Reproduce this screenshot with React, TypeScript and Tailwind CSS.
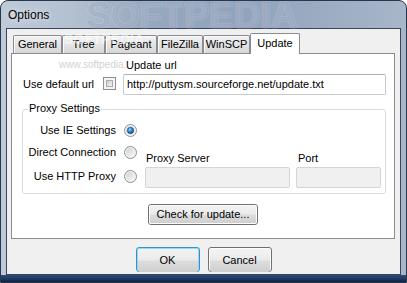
import React from "react";

const Radio = ({ checked }: { checked?: boolean }) => (
  <svg width="13" height="13" viewBox="0 0 13 13" className="block shrink-0">
    <defs>
      <linearGradient id="rgFill" x1="0" y1="0" x2="1" y2="1">
        <stop offset="0" stopColor="#cfd1d4" />
        <stop offset="1" stopColor="#fafafa" />
      </linearGradient>
      <radialGradient id="rgDot" cx="0.4" cy="0.35" r="0.75">
        <stop offset="0" stopColor="#a8dcfb" />
        <stop offset="0.45" stopColor="#2d86d2" />
        <stop offset="1" stopColor="#0c3a73" />
      </radialGradient>
    </defs>
    <circle cx="6.5" cy="6.5" r="6" fill="#f4f4f4" stroke="#8e8f8f" strokeWidth="1" />
    <circle cx="6.5" cy="6.5" r="4.5" fill="url(#rgFill)" />
    {checked && <circle cx="6.5" cy="6.5" r="3.2" fill="url(#rgDot)" stroke="#1a4c86" strokeWidth="0.6" />}
  </svg>
);

const Checkbox = () => (
  <div className="w-[13px] h-[13px] shrink-0 self-start mt-[3px] border border-[#8e8f8f] bg-[#f4f4f4] p-[2px]">
    <div className="w-full h-full border border-[#a9adb3] bg-[linear-gradient(135deg,#cbced2,#f3f4f5)]" />
  </div>
);

const Btn = ({ children, def, w }: { children: React.ReactNode; def?: boolean; w: string }) => (
  <div
    className={
      def
        ? "h-[25px] rounded-[3px] border border-[#3c8fc6] shadow-[inset_0_0_0_1px_#8fdcf8] " + w
        : "h-[25px] rounded-[3px] border border-[#707070] shadow-[inset_0_0_0_1px_#fcfcfc] " + w
    }
  >
    <div className="h-full m-[1px] rounded-[2px] bg-[linear-gradient(180deg,#f2f2f2_0%,#ebebeb_48%,#dddddd_52%,#cfcfcf_100%)] flex items-center justify-center text-black leading-[13px]">
      {children}
    </div>
  </div>
);

const SmallBtn = ({ children }: { children: React.ReactNode }) => (
  <div className="h-[21px] w-[110px] self-center mt-[10px] rounded-[3px] border border-[#707070]">
    <div className="h-[19px] m-0 rounded-[2px] border border-[#fcfcfc] bg-[linear-gradient(180deg,#f2f2f2_0%,#ebebeb_48%,#dddddd_52%,#cfcfcf_100%)] flex items-center justify-center text-black leading-[13px]">
      {children}
    </div>
  </div>
);

export default function App() {
  return (
    <div className="w-[407px] h-[283px] relative overflow-hidden rounded-t-[8px] border border-[#27374e] bg-[linear-gradient(90deg,#bfcad8_0%,#b3c0d0_18%,#97a9c0_35%,#90a3bc_60%,#9cacc2_80%,#a7b6c9_100%)] flex flex-col font-['Liberation_Sans',Arial,sans-serif] text-[11px] text-black">
      {/* title bar */}
      <div className="h-[27px] shrink-0 flex items-center pl-[7px] relative">
        <span
          className="absolute left-[85px] top-[-4px] text-[37px] font-bold leading-none tracking-[0px] text-[rgba(70,95,135,0.28)] [text-shadow:0_0_2px_rgba(255,255,255,0.45)] select-none"
        >
          SOFTPEDIA
        </span>
        <span className="relative text-[12px] leading-[14px] [text-shadow:0_0_6px_rgba(255,255,255,0.95)]">Options</span>
      </div>

      {/* client area */}
      <div className="ml-[5px] w-[395px] h-[247px] shrink-0 border border-[#3a4658] bg-[#f0f0f0] flex flex-col pt-[4px] pl-[4px]">
        {/* tabs */}
        <div className="h-[20px] flex items-end pl-[2px]">
          <div className="w-[49px] h-[18px] border border-b-0 border-[#898c95] rounded-t-[2px] shadow-[inset_1px_1px_0_#fafafa] bg-[linear-gradient(180deg,#f2f2f2,#e4e4e4_50%,#d6d6d6)] flex items-center justify-center leading-[13px]">General</div>
          <div className="w-[43px] h-[18px] border border-b-0 border-[#898c95] rounded-t-[2px] shadow-[inset_1px_1px_0_#fafafa] bg-[linear-gradient(180deg,#f2f2f2,#e4e4e4_50%,#d6d6d6)] flex items-center justify-center leading-[13px]">Tree</div>
          <div className="w-[52px] h-[18px] border border-b-0 border-[#898c95] rounded-t-[2px] shadow-[inset_1px_1px_0_#fafafa] bg-[linear-gradient(180deg,#f2f2f2,#e4e4e4_50%,#d6d6d6)] flex items-center justify-center leading-[13px]">Pageant</div>
          <div className="w-[46px] h-[18px] border border-b-0 border-[#898c95] rounded-t-[2px] shadow-[inset_1px_1px_0_#fafafa] bg-[linear-gradient(180deg,#f2f2f2,#e4e4e4_50%,#d6d6d6)] flex items-center justify-center leading-[13px]">FileZilla</div>
          <div className="w-[47px] h-[18px] border border-b-0 border-[#898c95] rounded-t-[2px] shadow-[inset_1px_1px_0_#fafafa] bg-[linear-gradient(180deg,#f2f2f2,#e4e4e4_50%,#d6d6d6)] flex items-center justify-center leading-[13px]">WinSCP</div>
          <div className="w-[50px] h-[21px] mb-[-1px] relative z-10 border border-b-0 border-[#898c95] rounded-t-[2px] bg-white flex items-center justify-center pb-[2px] leading-[13px]">Update</div>
        </div>

        {/* panel */}
        <div className="w-[384px] h-[186px] shrink-0 border border-[#898c95] bg-white flex flex-col">
          <div className="mt-[5px] ml-[114px] leading-[13px]">Update url</div>
          <div className="mt-[2px] h-[21px] flex items-center">
            <div className="w-[82px] text-right leading-[13px]">Use default url</div>
            <div className="ml-[9px] self-stretch flex">
              <Checkbox />
            </div>
            <div className="ml-[7px] w-[263px] h-[21px] rounded-[2px] border border-[#c5cbd3] border-t-[#abadb3] bg-white flex items-center pl-[3px] leading-[13px]">
              http://puttysm.sourceforge.net/update.txt
            </div>
          </div>

          {/* group box */}
          <div className="mt-[14px] ml-[10px] w-[364px] h-[85px] shrink-0 relative rounded-[3px] border border-[#d5dfe5] flex">
            <span className="absolute left-[5px] top-[-8px] bg-white px-[1px] leading-[13px]">Proxy Settings</span>
            <div className="pt-[9px] flex flex-col">
              <div className="h-[22px] flex items-center">
                <div className="w-[93px] text-right leading-[13px]">Use IE Settings</div>
                <div className="ml-[8px]"><Radio checked /></div>
              </div>
              <div className="h-[22px] flex items-center">
                <div className="w-[93px] text-right leading-[13px]">Direct Connection</div>
                <div className="ml-[8px]"><Radio /></div>
              </div>
              <div className="h-[26px] flex items-center">
                <div className="w-[93px] text-right leading-[13px]">Use HTTP Proxy</div>
                <div className="ml-[8px]"><Radio /></div>
              </div>
            </div>
            <div className="ml-[8px] pt-[42px] flex gap-[6px]">
              <div className="w-[145px] flex flex-col">
                <div className="pl-[1px] leading-[13px]">Proxy Server</div>
                <div className="mt-[2px] h-[21px] rounded-[2px] border border-[#d3d5d9] bg-[#f0f0f0]" />
              </div>
              <div className="w-[85px] flex flex-col">
                <div className="pl-[2px] leading-[13px]">Port</div>
                <div className="mt-[2px] h-[21px] rounded-[2px] border border-[#d3d5d9] bg-[#f0f0f0]" />
              </div>
            </div>
          </div>

          <SmallBtn>Check for update...</SmallBtn>
        </div>

        {/* buttons */}
        <div className="mt-[8px] pr-[4px] flex justify-center gap-[8px]">
          <Btn def w="w-[64px]">OK</Btn>
          <Btn w="w-[64px]">Cancel</Btn>
        </div>
      </div>

      {/* bottom frame */}
      <div className="flex-1 bg-[linear-gradient(180deg,#2d4d7d,#1b375f_60%,#0f213d)]" />

      {/* watermarks */}
      <span className="absolute left-[63px] top-[31px] text-[14px] font-bold leading-none text-[rgba(255,255,255,0.55)] pointer-events-none select-none">
        SOFTPEDIA<sup className="text-[6px]">™</sup>
      </span>
      <span className="absolute left-[58px] top-[58px] text-[10px] leading-[12px] text-[#d2d2d2] pointer-events-none select-none">
        www.softpedia.
      </span>
    </div>
  );
}
